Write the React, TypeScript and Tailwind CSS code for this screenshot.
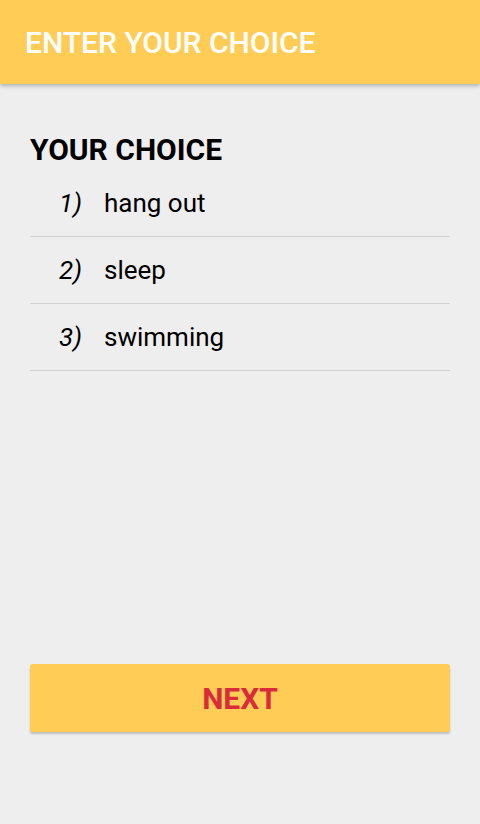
const choices = ["hang out", "sleep", "swimming"];

const App = () => {
  return (
    <div
      className="h-screen flex flex-col bg-[#eeeeee]"
      style={{ fontFamily: "Roboto, 'Liberation Sans', sans-serif" }}
    >
      <header className="h-[84px] shrink-0 bg-[#ffcd56] flex items-center px-[25px] shadow-[0_2px_4px_rgba(0,0,0,0.25)] relative z-10">
        <h1 className="text-white text-[30px] font-medium">ENTER YOUR CHOICE</h1>
      </header>

      <main className="flex-1 flex flex-col px-[30px] pt-[50px] pb-[92px]">
        <h2 className="text-[30px] font-bold leading-[32px] text-black">YOUR CHOICE</h2>
        <ul className="mt-[4px]">
          {choices.map((choice, i) => (
            <li
              key={choice}
              className="h-[67px] flex items-center border-b border-[#d2d2d2] text-[26px] text-black"
            >
              <span className="w-[52px] text-right italic">{i + 1})</span>
              <span className="ml-[22px]">{choice}</span>
            </li>
          ))}
        </ul>

        <div className="flex-1" />

        <button className="h-[68px] w-full rounded-[3px] bg-[#ffcd56] text-[#d92b3a] text-[30px] font-bold shadow-[0_2px_2px_rgba(0,0,0,0.2)]">
          NEXT
        </button>
      </main>
    </div>
  );
};

export default App;
